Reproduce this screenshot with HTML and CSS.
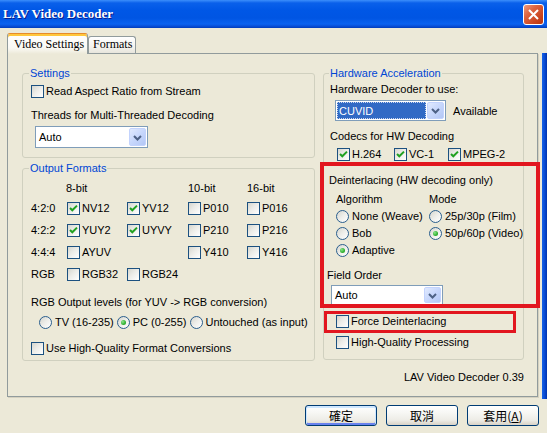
FILE: index.html
```html
<!DOCTYPE html>
<html>
<head>
<meta charset="utf-8">
<title>LAV Video Decoder</title>
<link rel="stylesheet" href="styles.css">
</head>
<body>
<div class="window">
  <header class="titlebar">
    <span class="title">LAV Video Decoder</span>
    <span class="close"><svg width="19" height="19" viewBox="0 0 19 19"><path d="M5 5 L14 14 M14 5 L5 14" stroke="#fff" stroke-width="2" fill="none"/></svg></span>
  </header>
  <div class="client">
    <div class="tabs">
      <div class="tab active">Video Settings</div>
      <div class="tab">Formats</div>
    </div>
    <div class="panel">
      <div class="cols">
        <div class="col-left">
          <section class="group g-settings">
            <div class="glabel">Settings</div>
            <label class="opt aspect"><span class="cb"></span>Read Aspect Ratio from Stream</label>
            <div class="line threads">Threads for Multi-Threaded Decoding</div>
            <div class="combo combo-threads">
              <span class="combo-text">Auto</span>
              <span class="combo-btn"><svg width="15" height="15" viewBox="0 0 15 15"><path d="M4 6 L7.5 9.5 L11 6" fill="none" stroke="#4D6185" stroke-width="2"/></svg></span>
            </div>
          </section>
          <section class="group g-output">
            <div class="glabel">Output Formats</div>
            <div class="fmt fmt-head">
              <span></span><span>8-bit</span><span></span><span>10-bit</span><span>16-bit</span>
            </div>
            <div class="fmt fmt-grid">
              <span>4:2:0</span>
              <label class="opt"><span class="cb"><svg width="11" height="11" viewBox="0 0 11 11"><path d="M2 5 L4.3 7.3 L9 2.6" fill="none" stroke="#21A121" stroke-width="2"/></svg></span>NV12</label>
              <label class="opt"><span class="cb"><svg width="11" height="11" viewBox="0 0 11 11"><path d="M2 5 L4.3 7.3 L9 2.6" fill="none" stroke="#21A121" stroke-width="2"/></svg></span>YV12</label>
              <label class="opt"><span class="cb"></span>P010</label>
              <label class="opt"><span class="cb"></span>P016</label>

              <span>4:2:2</span>
              <label class="opt"><span class="cb"><svg width="11" height="11" viewBox="0 0 11 11"><path d="M2 5 L4.3 7.3 L9 2.6" fill="none" stroke="#21A121" stroke-width="2"/></svg></span>YUY2</label>
              <label class="opt"><span class="cb"><svg width="11" height="11" viewBox="0 0 11 11"><path d="M2 5 L4.3 7.3 L9 2.6" fill="none" stroke="#21A121" stroke-width="2"/></svg></span>UYVY</label>
              <label class="opt"><span class="cb"></span>P210</label>
              <label class="opt"><span class="cb"></span>P216</label>

              <span>4:4:4</span>
              <label class="opt"><span class="cb"></span>AYUV</label>
              <span></span>
              <label class="opt"><span class="cb"></span>Y410</label>
              <label class="opt"><span class="cb"></span>Y416</label>

              <span>RGB</span>
              <label class="opt"><span class="cb"></span>RGB32</label>
              <label class="opt"><span class="cb"></span>RGB24</label>
              <span></span>
              <span></span>
            </div>
            <div class="line levels">RGB Output levels (for YUV -&gt; RGB conversion)</div>
            <div class="radios levels-row">
              <label class="opt ro"><span class="rb"></span>TV (16-235)</label>
              <label class="opt ro"><span class="rb on"></span>PC (0-255)</label>
              <label class="opt ro"><span class="rb"></span>Untouched (as input)</label>
            </div>
            <label class="opt hqconv"><span class="cb"></span>Use High-Quality Format Conversions</label>
          </section>
        </div>
        <section class="group g-hw">
          <div class="glabel">Hardware Acceleration</div>
          <div class="line hwdec">Hardware Decoder to use:</div>
          <div class="hwrow">
            <div class="combo combo-hw">
              <span class="combo-text sel">CUVID</span>
              <span class="combo-btn"><svg width="15" height="15" viewBox="0 0 15 15"><path d="M4 6 L7.5 9.5 L11 6" fill="none" stroke="#4D6185" stroke-width="2"/></svg></span>
            </div>
            <span class="avail">Available</span>
          </div>
          <div class="line codecs">Codecs for HW Decoding</div>
          <div class="codec-row">
            <label class="opt c1"><span class="cb"><svg width="11" height="11" viewBox="0 0 11 11"><path d="M2 5 L4.3 7.3 L9 2.6" fill="none" stroke="#21A121" stroke-width="2"/></svg></span>H.264</label>
            <label class="opt c2"><span class="cb"><svg width="11" height="11" viewBox="0 0 11 11"><path d="M2 5 L4.3 7.3 L9 2.6" fill="none" stroke="#21A121" stroke-width="2"/></svg></span>VC-1</label>
            <label class="opt"><span class="cb"><svg width="11" height="11" viewBox="0 0 11 11"><path d="M2 5 L4.3 7.3 L9 2.6" fill="none" stroke="#21A121" stroke-width="2"/></svg></span>MPEG-2</label>
          </div>
          <div class="line deint">Deinterlacing (HW decoding only)</div>
          <div class="deint-grid">
            <span>Algorithm</span><span>Mode</span>
            <label class="opt ro"><span class="rb"></span>None (Weave)</label>
            <label class="opt ro"><span class="rb"></span>25p/30p (Film)</label>
            <label class="opt ro"><span class="rb"></span>Bob</label>
            <label class="opt ro"><span class="rb on"></span>50p/60p (Video)</label>
            <label class="opt ro"><span class="rb on"></span>Adaptive</label>
            <span></span>
          </div>
          <div class="line field">Field Order</div>
          <div class="combo combo-field">
            <span class="combo-text">Auto</span>
            <span class="combo-btn"><svg width="15" height="15" viewBox="0 0 15 15"><path d="M4 6 L7.5 9.5 L11 6" fill="none" stroke="#4D6185" stroke-width="2"/></svg></span>
          </div>
          <label class="opt force"><span class="cb"></span>Force Deinterlacing</label>
          <label class="opt hqproc"><span class="cb"></span>High-Quality Processing</label>
        </section>
      </div>
      <div class="version">LAV Video Decoder 0.39</div>
    </div>
    <div class="buttons">
      <button class="btn btn-ok default">確定</button>
      <button class="btn btn-cancel">取消</button>
      <button class="btn btn-apply">套用(<u>A</u>)</button>
    </div>
  </div>
  <div class="frame-edge"></div>
  <div class="mark mark-deint"></div>
  <div class="mark mark-force"></div>
</div>
</body>
</html>
```

FILE: styles.css
```css
* { box-sizing: border-box; }

html, body {
  margin: 0;
  padding: 0;
}

body {
  width: 547px;
  height: 433px;
  overflow: hidden;
  background: #ECE9D8;
  font-family: "Liberation Sans", Arial, sans-serif;
  font-size: 11px;
  line-height: 16px;
  color: #000;
}

.window {
  position: relative;
  width: 547px;
  height: 433px;
  display: flex;
  flex-direction: column;
}

/* ---------- title bar ---------- */
.titlebar {
  flex: none;
  height: 28px;
  display: flex;
  align-items: center;
  justify-content: space-between;
  padding: 0 3px 0 3px;
  background: linear-gradient(to bottom,
    #3C8EFB 0px, #0A60EA 3px, #0057E6 10px, #0055E3 18px,
    #0A62F0 24px, #0850DA 26px, #003CBB 28px);
}

.title {
  font-family: "Liberation Serif", "Times New Roman", serif;
  font-weight: bold;
  font-size: 13px;
  color: #fff;
  text-shadow: 1px 1px 0 #0A1B8A;
}

.close {
  width: 21px;
  height: 21px;
  border: 1px solid #fff;
  border-radius: 3px;
  background: linear-gradient(135deg, #EE9A7E 0%, #DD6440 35%, #C8431E 75%, #B8360F 100%);
  display: flex;
}

/* ---------- client ---------- */
.client {
  flex: 1;
  width: 542px;
  padding: 5px 0 0 7px;
}

.tabs {
  display: flex;
  align-items: flex-end;
  height: 20px;
}

.tab {
  font-family: "Liberation Serif", "Times New Roman", serif;
  font-size: 12px;
  height: 17px;
  line-height: 15px;
  padding: 0 3px 0 4px;
  border: 1px solid #919B9C;
  border-bottom: none;
  border-radius: 3px 3px 0 0;
  background: linear-gradient(#FFFFFF, #F4F3EE 60%, #E7E5DC);
  white-space: nowrap;
}

.tab.active {
  position: relative;
  z-index: 1;
  width: 81px;
  height: 21px;
  margin-bottom: -1px;
  padding: 2px 0 0 6px;
  line-height: 16px;
  border-top: 1px solid #E68B2C;
  box-shadow: inset 0 2px 0 #FFC73C;
  background: linear-gradient(#FFFFFF, #FAF9F4 70%, #ECE9D8);
}

.panel {
  width: 531px;
  height: 344px;
  border: 1px solid #919B9C;
  background: #ECE9D8;
  box-shadow: 1px 1px 0 #D5D1C0;
  padding: 19px 13px 0 14px;
}

.cols {
  display: flex;
  align-items: flex-start;
  gap: 8px;
}

.col-left {
  width: 293px;
  display: flex;
  flex-direction: column;
}

/* ---------- group boxes ---------- */
.group {
  border: 1px solid #D0D0BF;
  border-radius: 3px;
  padding: 0 8px 10px 8px;
}

.glabel {
  width: max-content;
  margin: -7px 0 0 -2px;
  padding: 0 1px;
  height: 13px;
  line-height: 13px;
  background: #ECE9D8;
  color: #0046D5;
}

.g-settings { padding-bottom: 9px; }
.g-output { margin-top: 10px; padding-bottom: 4px; }
.g-hw { width: 201px; padding: 0 6px 9px 6px; }
.g-hw .glabel { margin-left: -1px; }

.line {
  height: 16px;
  line-height: 16px;
  white-space: nowrap;
}

/* ---------- options ---------- */
.opt {
  display: flex;
  align-items: center;
  gap: 2px;
  height: 16px;
  white-space: nowrap;
}

.opt.ro { gap: 3px; }

.cb {
  flex: none;
  width: 13px;
  height: 13px;
  border: 1px solid #1C5180;
  background: linear-gradient(135deg, #D6D6CE 0%, #ECECE8 45%, #FFFFFF 100%);
  display: inline-flex;
}

.rb {
  flex: none;
  width: 13px;
  height: 13px;
  border-radius: 50%;
  border: 1px solid #2A5E8E;
  background: linear-gradient(135deg, #D6D6CE 0%, #EEEEEA 50%, #FFFFFF 100%);
  display: inline-flex;
  align-items: center;
  justify-content: center;
}

.rb.on::after {
  content: "";
  width: 5px;
  height: 5px;
  border-radius: 50%;
  background: radial-gradient(circle at 35% 35%, #8AE58A, #30B030 60%, #1F951F);
}

/* ---------- combo ---------- */
.combo {
  display: flex;
  border: 1px solid #7F9DB9;
  background: #fff;
  padding: 1px;
}

.combo-text {
  flex: 1;
  padding-left: 2px;
  display: flex;
  align-items: center;
}

.combo-text.sel {
  background: #316AC5;
  color: #fff;
  outline: 1px dotted #C9D6EE;
  outline-offset: -1px;
  margin-right: 1px;
}

.combo-btn {
  flex: none;
  width: 17px;
  border: 1px solid #C3D3FD;
  border-radius: 2px;
  background: linear-gradient(135deg, #E1EAFE 0%, #C7D7FC 50%, #B3C7F5 100%);
  display: flex;
  align-items: center;
  justify-content: center;
}

/* ---------- settings group ---------- */
.aspect { margin-top: 3px; }
.threads { margin-top: 8px; }
.combo-threads {
  width: 113px;
  height: 22px;
  margin: 3px 0 0 4px;
}

/* ---------- output group ---------- */
.fmt {
  display: grid;
  grid-template-columns: 36px 60px 61px 59px 1fr;
}
.fmt-head { margin-top: 5px; height: 16px; }
.fmt-head span:nth-child(2) { margin-left: -1px; }
.fmt-grid {
  margin-top: 4px;
  grid-auto-rows: 16px;
  row-gap: 6px;
}
.fmt-grid > span { line-height: 16px; }

.levels { margin-top: 12px; }
.radios {
  display: flex;
  gap: 3px;
}
.levels-row { margin: 4px 0 0 8px; }
.hqconv { margin-top: 10px; }

/* ---------- hardware group ---------- */
.hwdec { margin-top: 1px; }
.hwrow {
  display: flex;
  align-items: center;
  margin-top: 3px;
}
.combo-hw {
  width: 111px;
  height: 21px;
  margin-left: 5px;
}
.avail { margin-left: 7px; }
.codecs { margin-top: 7px; }
.codec-row {
  display: flex;
  margin: 2px 0 0 7px;
}
.codec-row .c1 { width: 57px; }
.codec-row .c2 { width: 54px; }

.deint { margin: 10px 0 0 -1px; }
.deint-grid {
  display: grid;
  grid-template-columns: 93px auto;
  grid-auto-rows: 16px;
  row-gap: 1px;
  margin: 3px 0 0 6px;
}
.deint-grid > span { line-height: 16px; }

.field { margin: 9px 0 0 -3px; }
.combo-field {
  width: 112px;
  height: 20px;
  margin: 2px 0 0 1px;
}
.force { margin: 8px 0 0 6px; }
.hqproc { margin: 5px 0 0 6px; }

.version {
  margin-top: 9px;
  text-align: right;
  line-height: 14px;
}

/* ---------- buttons ---------- */
.buttons {
  display: flex;
  justify-content: flex-end;
  gap: 9px;
  padding-right: 3px;
  margin-top: 8px;
}

.btn {
  width: 72px;
  height: 21px;
  padding: 0;
  border: 1px solid #003C74;
  border-radius: 3px;
  background: linear-gradient(#FFFFFF 0%, #F7F7F4 35%, #EDECE6 75%, #D8D2C6 100%);
  font-family: "Noto Sans CJK TC", "Noto Sans CJK SC", sans-serif;
  font-size: 12px;
  line-height: 17px;
  color: #000;
  text-align: center;
}

.btn u { text-underline-offset: 1px; }

.btn.default {
  box-shadow: inset 0 1px 0 1px #CEE7FF, inset 0 -1px 0 1px #6982EE;
}

/* ---------- overlays ---------- */
.frame-edge {
  position: absolute;
  right: 0;
  top: 53px;
  width: 5px;
  height: 346px;
  background: linear-gradient(to right, #1663E8, #0747D0 60%, #0033AA);
}

.mark {
  position: absolute;
  border-style: solid;
  border-color: #E2161F;
}

.mark-deint {
  left: 320px;
  top: 162px;
  width: 220px;
  height: 146px;
  border-width: 4px;
}

.mark-force {
  left: 324px;
  top: 311px;
  width: 192px;
  height: 22px;
  border-width: 3px;
}
```
